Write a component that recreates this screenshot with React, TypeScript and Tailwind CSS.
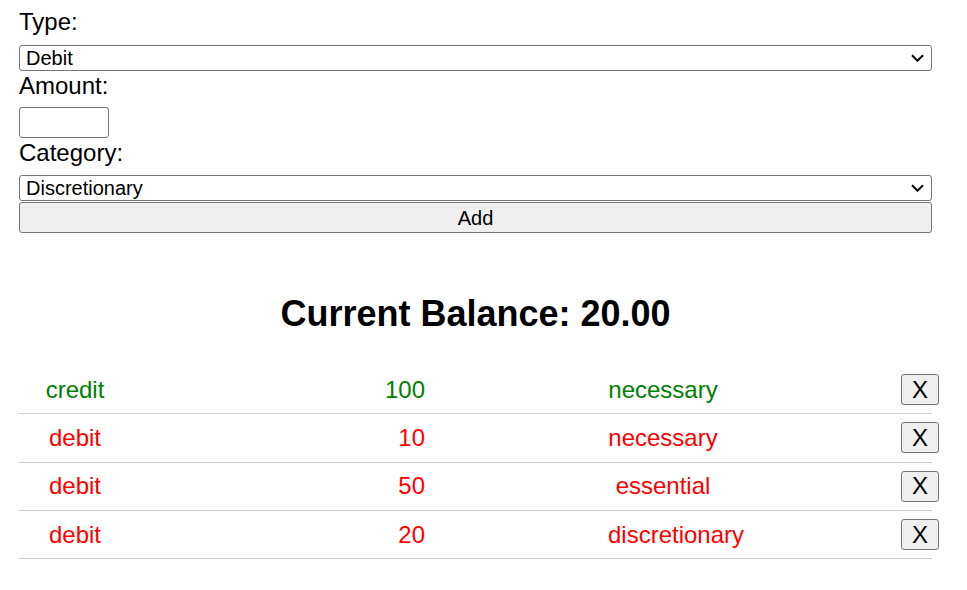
import type {ReactNode} from "react";

type Entry = {
    type: "credit" | "debit"
    amount: number
    category: string
}

const entries: Entry[] = [
    {type: "credit", amount: 100, category: "necessary"},
    {type: "debit", amount: 10, category: "necessary"},
    {type: "debit", amount: 50, category: "essential"},
    {type: "debit", amount: 20, category: "discretionary"},
];

function Chevron() {
    return (
        <svg className="pointer-events-none absolute right-[8px] top-1/2 -translate-y-1/2" width="13" height="8"
             viewBox="0 0 13 8" fill="none">
            <path d="M1 1.2l5.5 5.5 5.5-5.5" stroke="#000" strokeWidth={2}/>
        </svg>
    );
}

function Select({children}: { children: ReactNode }) {
    return (
        <div className="relative w-full">
            <select
                className="block h-[26px] w-full appearance-none rounded-[3px] border border-[#767676] bg-white pl-[6px] text-[20px] leading-[24px] text-black outline-none">
                {children}
            </select>
            <Chevron/>
        </div>
    );
}

export default function App() {
    return (
        <div className="min-h-[590px] bg-white px-[19px] text-[24px] text-black"
             style={{fontFamily: '"Liberation Sans", Arial, sans-serif'}}>
            <div className="w-[913px]">
                {/* form */}
                <div className="pt-[8px]">
                    <label className="block h-[28px] leading-[28px]">Type:</label>
                    <div className="mt-[9px]">
                        <Select>
                            <option>Debit</option>
                            <option>Credit</option>
                        </Select>
                    </div>
                    <label className="mt-[1px] block h-[28px] leading-[28px]">Amount:</label>
                    <input
                        type="number"
                        className="mt-[7px] block h-[31px] w-[90px] rounded-[3px] border border-[#767676] bg-white px-[2px] text-[20px] outline-none"
                    />
                    <label className="mt-[1px] block h-[28px] leading-[28px]">Category:</label>
                    <div className="mt-[8px]">
                        <Select>
                            <option>Discretionary</option>
                            <option>Necessary</option>
                            <option>Essential</option>
                        </Select>
                    </div>
                    <button
                        className="mt-[1px] block h-[31px] w-full rounded-[3px] border border-[#767676] bg-[#efefef] text-[20px] leading-[24px] text-black">
                        Add
                    </button>
                </div>

                <h2 className="mt-[60px] text-center text-[36px] font-bold leading-[42px]">
                    Current Balance: 20.00
                </h2>

                {/* transactions */}
                <div className="mt-[31px]">
                    {entries.map((e, i) => (
                        <div key={i}
                             className={`flex h-[48.33px] items-center border-b border-[#cccccc] ${e.type === "credit" ? "text-[#008000]" : "text-[#ff0000]"}`}>
                            <div className="w-[112px] shrink-0 text-center">{e.type}</div>
                            <div className="w-[294px] shrink-0 text-right">{e.amount}</div>
                            <div className="ml-[183px] w-[110px] shrink-0 whitespace-nowrap text-center">{e.category}</div>
                            <button
                                className="ml-[183px] h-[31px] w-[38px] shrink-0 rounded-[3px] border border-[#767676] bg-[#efefef] text-[24px] leading-[28px] text-black">
                                X
                            </button>
                        </div>
                    ))}
                </div>
            </div>
        </div>
    );
}
